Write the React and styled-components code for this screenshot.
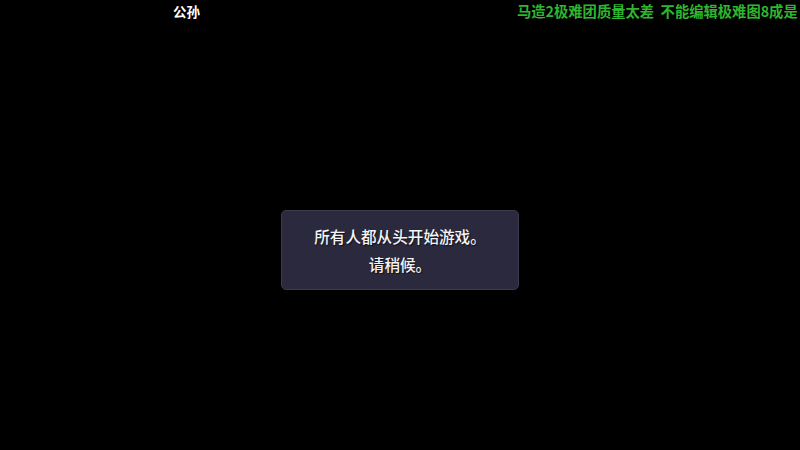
import React from "react";
import styled, { createGlobalStyle } from "styled-components";

const Global = createGlobalStyle`
  html, body { margin: 0; padding: 0; background: #000; }
  body { width: 800px; height: 450px; overflow: hidden; }
  #root { width: 800px; height: 450px; }
`;

const Screen = styled.div`
  width: 800px;
  height: 450px;
  background: #000;
  display: flex;
  flex-direction: column;
  font-family: "Noto Sans CJK SC", "Noto Sans", sans-serif;
  overflow: hidden;
`;

const TopBar = styled.div`
  height: 22px;
  display: flex;
  align-items: center;
  white-space: nowrap;
`;

const Label = styled.span`
  font-size: ${(p) => p.$size}px;
  font-weight: 700;
  line-height: 22px;
  color: ${(p) => p.$color};
  text-shadow: 0 0 2px #000, 1px 1px 1px #000;
  margin-left: ${(p) => p.$offset}px;
  flex-shrink: 0;
`;

const Stage = styled.div`
  flex: 1;
  display: flex;
  align-items: center;
  justify-content: center;
  padding-top: 27px;
`;

const Dialog = styled.div`
  width: 236px;
  height: 78px;
  box-sizing: content-box;
  background: #2a293d;
  border: 1px solid #3c3b4e;
  border-radius: 5px;
  display: flex;
  flex-direction: column;
  align-items: center;
  justify-content: center;
`;

const Line = styled.div`
  font-size: 15.6px;
  font-weight: 500;
  line-height: 28px;
  color: #f4f4f6;
  text-shadow: 1px 1px 1px rgba(0, 0, 0, 0.6);
`;

export default function App() {
  return (
    <>
      <Global />
      <Screen>
        <TopBar>
          <Label $color="#ffffff" $size={13.5} $offset={173}>公孙</Label>
          <Label $color="#2fb52f" $size={14.3} $offset={317}>马造2极难团质量太差&nbsp;&nbsp;不能编辑极难图8成是</Label>
        </TopBar>
        <Stage>
          <Dialog>
            <Line>所有人都从头开始游戏。</Line>
            <Line>请稍候。</Line>
          </Dialog>
        </Stage>
      </Screen>
    </>
  );
}
